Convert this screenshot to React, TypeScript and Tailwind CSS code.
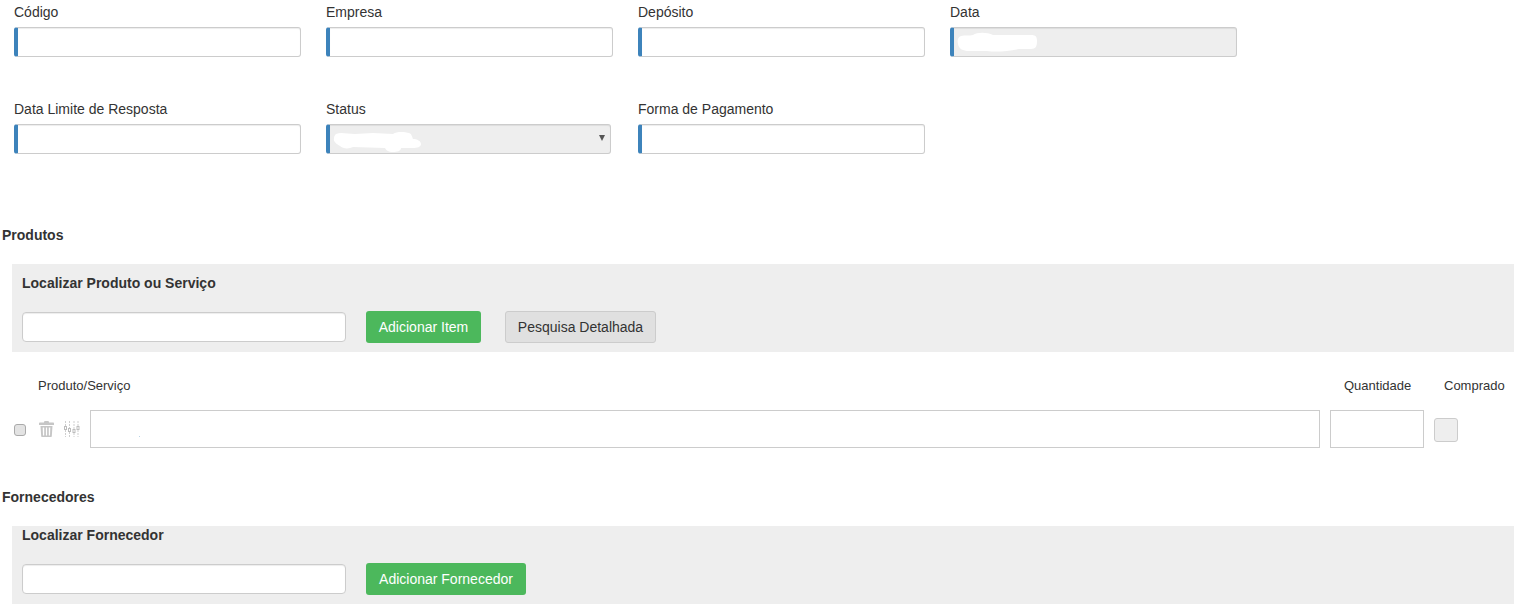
const font = 'font-["Liberation_Sans",Arial,sans-serif]'

function Field({ label, width = 'w-[287px]', disabled = false, select = false, blob }: {
  label: string
  width?: string
  disabled?: boolean
  select?: boolean
  blob?: React.ReactNode
}) {
  return (
    <div className="w-[287px]">
      <div className="h-5 mb-[5px] text-sm leading-5 text-[#333]">{label}</div>
      <div className={`relative h-[30px] ${width} rounded-[3px] border border-[#ccc] border-l-4 border-l-[#3d83bb] shadow-[inset_0_1px_1px_rgba(0,0,0,0.075)] ${disabled ? 'bg-[#eee]' : 'bg-white'}`}>
        {blob}
        {select && <span className="absolute right-[5px] top-[10px] w-0 h-0 border-x-[3px] border-x-transparent border-t-[6px] border-t-[#555]" />}
      </div>
    </div>
  )
}

function TextBox({ width }: { width: string }) {
  return <div className={`h-[30px] ${width} rounded border border-[#ccc] bg-white shadow-[inset_0_1px_1px_rgba(0,0,0,0.075)]`} />
}

function StatusBlob() {
  return (
    <svg className="absolute left-[3px] top-[6px]" width="88" height="22" viewBox="0 0 88 22" fill="#fff">
      <path d="M3 3 C8 1 14 3 22 3 L40 2 L60 3 C64 0 72 1 76 2 C79 3 79 6 80 8 C84 8 88 10 88 13 C88 16 84 17 80 17 L68 17 C68 20 64 21 60 21 C55 21 53 19 52 17 L20 16 C16 18 10 18 7 15 C4 13 0 11 1 7 C1 5 2 4 3 3 Z" />
    </svg>
  )
}

function DataBlob() {
  return (
    <svg className="absolute left-[3px] top-[4px]" width="82" height="22" viewBox="0 0 82 22" fill="#fff">
      <path d="M4 4 C8 3 12 4 16 3 C20 0 30 0 36 3 L74 3 C79 3 80 5 80 9 C80 14 79 17 74 17 L62 17 C50 20 36 20 30 19 L12 19 C6 19 2 17 1 12 C0 8 1 5 4 4 Z" />
    </svg>
  )
}

function TrashIcon() {
  return (
    <svg width="15" height="16" viewBox="0 0 15 16" fill="#c6c6c6">
      <path d="M5.500 0h4l.6 1.500H14c.6 0 1 .4 1 1V4H0V2.500c0-.6.4-1 1-1h3.900z" />
      <path d="M1.500 5h12l-.7 10c0 .6-.4 1-1 1H3.200c-.6 0-1-.4-1-1zM3.700 6.500l.3 8h1.200v-8zM6.900 6.500v8h1.200v-8zM9.800 6.500v8H11l.3-8z" fillRule="evenodd" />
    </svg>
  )
}

function SlidersIcon() {
  return (
    <svg width="16" height="16" viewBox="0 0 16 16" fill="none" stroke="#cfcfcf" strokeWidth="1">
      <path d="M1.500 0v5M1.500 9v7M5.500 0v7M5.500 11v5M10 0v8M10 12v4M14 0v5M14 9v7" strokeDasharray="2 1" />
      <rect x="0.500" y="5.500" width="2" height="3" stroke="#bdbdbd" />
      <rect x="4.500" y="7.500" width="2" height="3" stroke="#bdbdbd" />
      <rect x="9" y="8.500" width="2" height="3" stroke="#bdbdbd" />
      <rect x="13" y="5.500" width="2" height="3" stroke="#bdbdbd" />
    </svg>
  )
}

export default function App() {
  return (
    <div className={`${font} w-[1519px] h-[614px] overflow-hidden bg-white text-[#333]`}>
      <div className="pt-[2px] pl-[14px]">
        <div className="flex gap-[25px]">
          <Field label="Código" />
          <Field label="Empresa" />
          <Field label="Depósito" />
          <Field label="Data" disabled blob={<DataBlob />} />
        </div>
        <div className="flex gap-[25px] mt-[42px]">
          <Field label="Data Limite de Resposta" />
          <Field label="Status" width="w-[285px]" disabled select blob={<StatusBlob />} />
          <Field label="Forma de Pagamento" />
        </div>
      </div>

      <div className="mt-[71px] pl-[2px] h-5 text-sm leading-5 font-bold">Produtos</div>

      <div className="mt-[19px] ml-3 w-[1502px] h-[88px] bg-[#eee] pl-[10px] pt-[9px]">
        <div className="text-sm leading-5 font-bold">Localizar Produto ou Serviço</div>
        <div className="mt-[18px] flex items-center">
          <TextBox width="w-[324px]" />
          <button className="ml-5 h-8 w-[115px] rounded-[3px] bg-[#4cb85c] text-sm text-white">Adicionar Item</button>
          <button className="ml-6 h-8 w-[151px] rounded-[3px] border border-[#ccc] bg-[#e0e0e0] text-sm text-[#333]">Pesquisa Detalhada</button>
        </div>
      </div>

      <div className="mt-[25px] flex h-[18px] text-[13px] leading-[18px]">
        <div className="ml-[38px] w-[1306px]">Produto/Serviço</div>
        <div className="w-[100px]">Quantidade</div>
        <div>Comprado</div>
      </div>

      <div className="mt-[15px] ml-[14px] flex items-center">
        <div className="mt-[2px] w-3 h-3 rounded-[3px] border border-[#aaa] bg-[#e3e3e3]" />
        <div className="ml-[13px] flex"><TrashIcon /></div>
        <div className="ml-[10px] flex"><SlidersIcon /></div>
        <div className="relative ml-[10px] h-[38px] w-[1230px] border border-[#ccc] bg-white">
          <span className="absolute left-[48px] top-[25px] w-px h-px bg-[#b9d3e6]" />
        </div>
        <div className="ml-[10px] h-[38px] w-[94px] border border-[#ccc] bg-white" />
        <div className="ml-[10px] mt-[2px] h-6 w-6 rounded-[3px] border border-[#ccc] bg-[#eee]" />
      </div>

      <div className="mt-[39px] pl-[2px] h-5 text-sm leading-5 font-bold">Fornecedores</div>

      <div className="mt-[19px] ml-3 w-[1502px] h-[78px] bg-[#eee] pl-[10px]">
        <div className="text-sm leading-[18px] font-bold">Localizar Fornecedor</div>
        <div className="mt-[19px] flex items-center">
          <TextBox width="w-[324px]" />
          <button className="ml-5 h-8 w-[160px] rounded-[3px] bg-[#4cb85c] text-sm text-white">Adicionar Fornecedor</button>
        </div>
      </div>
    </div>
  )
}
